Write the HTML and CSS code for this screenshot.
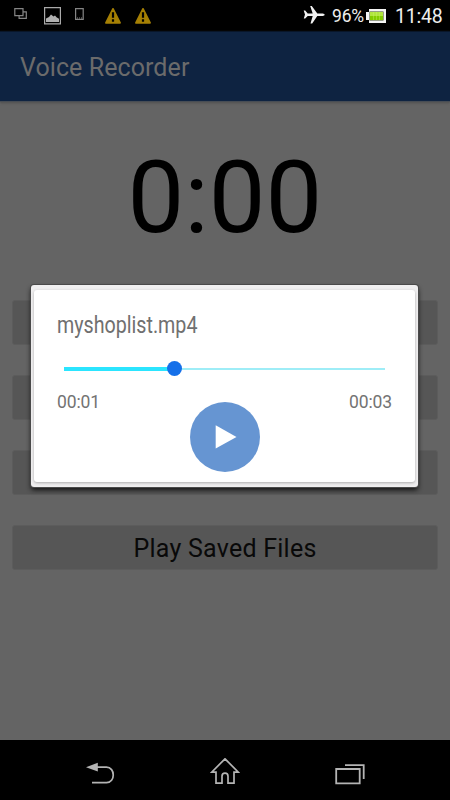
FILE: index.html
```html
<!DOCTYPE html>
<html lang="en">
<head>
<meta charset="utf-8">
<title>Voice Recorder</title>
<link rel="stylesheet" href="styles.css">
</head>
<body>
<div class="phone">
  <header class="status">
    <svg class="notices" width="160" height="31" viewBox="0 0 160 31">
      <g fill="none" stroke="#858585" stroke-width="1.2">
        <path d="M14.8 8.6h8.2v7h-8.2zM23.5 11.8h2.8v6.6h-7.2v-2.5"/>
        <path d="M44.6 7.7h15.8v16.2H44.6z" stroke="#aaa"/>
        <path d="M75.6 8.7h7.6v10.6h-7.6z"/>
      </g>
      <path d="M46 22v-3.5l3-1.5 2-2.5 2.5 2 1.5-1 1.5 1.8 2.5 1.5V22z" fill="#b0b0b0"/>
      <path d="M77 18h1M79 18h1M81 18h1" stroke="#858585"/>
      <g id="alert">
        <path d="M113 8.7l7.2 14.2h-14.4z" fill="#a68004" stroke="#a68004" stroke-width="1.5" stroke-linejoin="round"/>
        <path d="M113 12.2v5.5M113 19.3v2.4" stroke="#050400" stroke-width="2.2"/>
      </g>
      <use href="#alert" x="30"/>
    </svg>
    <div class="system">
      <svg class="plane" width="22" height="20" viewBox="0 0 22 20"><path d="M0.7 5.5h1.5l2.5 3h5L7.2 1h1.6l5.5 7.5h5.4q2 .4 2 1.2t-2 1.2h-5.4L9.2 18.5H7.5l2.2-7.6h-5l-2.5 2.7H.8l1.2-4z" fill="#f2f2f2"/></svg>
      <span class="percent">96%</span>
      <svg class="battery" width="20" height="14" viewBox="0 0 20 14"><path d="M3 0h17v14H3v-3H0V3h3z" fill="#f5f5f5"/><path d="M3.5 2.5h14v9h-14z" fill="#394719"/><path d="M4 3h13v4H4z" fill="#b2e63f"/><path d="M4 7h13v4H4z" fill="#83cc00"/><path d="M7.5 3v8M10.5 3v8M13.5 3v8" stroke="#caf36a" stroke-width=".4"/></svg>
      <span class="clock">11:48</span>
    </div>
  </header>
  <div class="appbar"><h1>Voice Recorder</h1></div>
  <main class="content">
    <div class="timer">0:00</div>
    <div class="buttons">
      <div class="button"></div>
      <div class="button"></div>
      <div class="button"></div>
      <div class="button">Play Saved Files</div>
    </div>
  </main>
  <nav class="navbar">
    <svg width="30" height="28" viewBox="0 0 30 28"><path d="M12 9.2h9.5c9 0 9 15.4 0 15.4H7" fill="none" stroke="#b4b4b4" stroke-width="1.7"/><path d="M1 9.2l11.8-4.4v8.8z" fill="#b4b4b4"/></svg>
    <svg width="30" height="28" viewBox="0 0 30 28"><path d="M15 .8L1.7 14.2H6v11h6v-7q0-3 3-3t3 3v7h6v-11h4.3z" fill="none" stroke="#b4b4b4" stroke-width="1.7"/></svg>
    <svg width="30" height="28" viewBox="0 0 30 28"><path d="M1.2 11h23.5v14.3H1.2zM10 7.1h18.7v14" fill="none" stroke="#b4b4b4" stroke-width="1.8"/></svg>
  </nav>
  <section class="dialog">
    <div class="sheet">
      <h2><span>myshoplist.mp4</span></h2>
      <div class="seek"><div class="played"></div><div class="rest"></div><div class="thumb"></div></div>
      <div class="controls">
        <span>00:01</span>
        <svg class="play" width="70" height="70" viewBox="0 0 70 70"><circle cx="35" cy="35" r="35" fill="#6695d2"/><path d="M25.7 23.2L46.5 35 25.7 46.5z" fill="#fff"/></svg>
        <span>00:03</span>
      </div>
    </div>
  </section>
</div>
</body>
</html>
```
FILE: styles.css
```css
* { box-sizing: border-box; }
body { margin: 0; background: #000; font-family: Roboto, "Liberation Sans", sans-serif; }
h1, h2 { margin: 0; font-weight: 400; }
svg { display: block; flex: none; }
.phone { position: relative; width: 450px; height: 800px; display: flex; flex-direction: column; overflow: hidden; background: #646464; }
.status { height: 31px; flex: none; background: #000; color: #eee; display: flex; justify-content: space-between; }
.system { display: flex; align-items: center; padding: 1px 7px 0 0; }
.plane { margin-right: 7px; margin-top: -2px; }
.percent { font-size: 17.5px; width: 34px; letter-spacing: -.2px; }
.battery { margin-right: 9px; }
.clock { width: 48px; font-size: 19.5px; letter-spacing: -.2px; white-space: nowrap; }
.appbar { height: 71px; flex: none; border-top: 1px solid #091629; border-bottom: 1px solid #474d55; background: #0e2341; display: flex; align-items: center; padding: 2px 0 0 20px; box-shadow: 0 1px 2px #505050; }
.appbar h1 { font-size: 25px; line-height: 30px; letter-spacing: .08px; color: #6b6b6b; white-space: nowrap; }
.content { flex: 1; padding: 37px 12px 0; }
.timer { height: 118px; line-height: 118px; font-size: 101px; text-align: center; color: #000; }
.buttons { display: flex; flex-direction: column; gap: 30px; padding-top: 43px; }
.button { height: 45px; border: 1px solid #5c5c5c; border-radius: 3px; background: #565656; font-size: 25px; line-height: 45px; letter-spacing: .25px; text-align: center; color: #090909; }
.navbar { height: 60px; flex: none; background: #000; display: flex; justify-content: space-between; align-items: center; padding: 3px 85px 0; }
.dialog { position: absolute; left: 31px; top: 285px; width: 387px; height: 202px; padding: 5px 3px 5px 3px; border-radius: 3px; background: #f0eff0; box-shadow: 0 0 0 1px #4a4a4a, 0 3px 5px #111; }
.sheet { height: 192px; padding: 22px 23px 0; border-radius: 3px; background: #fff; box-shadow: 0 1px 3px #aaa; }
.sheet h2 { height: 27px; font-size: 23px; line-height: 28px; color: #707070; }
.sheet h2 span { display: inline-block; transform: scaleX(.855); transform-origin: left; }
.seek { position: relative; display: flex; align-items: center; height: 16px; margin: 22px 7px 0; }
.played { width: 110px; height: 4px; background: #2be5ff; }
.rest { flex: 1; height: 2px; background: #9eedf7; }
.thumb { position: absolute; left: 103px; top: 0; width: 15px; height: 15px; border-radius: 50%; background: #1570e9; }
.controls { display: flex; justify-content: space-between; padding-top: 15px; color: #737373; font-size: 17.5px; line-height: 20px; }
.controls span { letter-spacing: -.1px; }
.play { margin-top: 10px; }
```
